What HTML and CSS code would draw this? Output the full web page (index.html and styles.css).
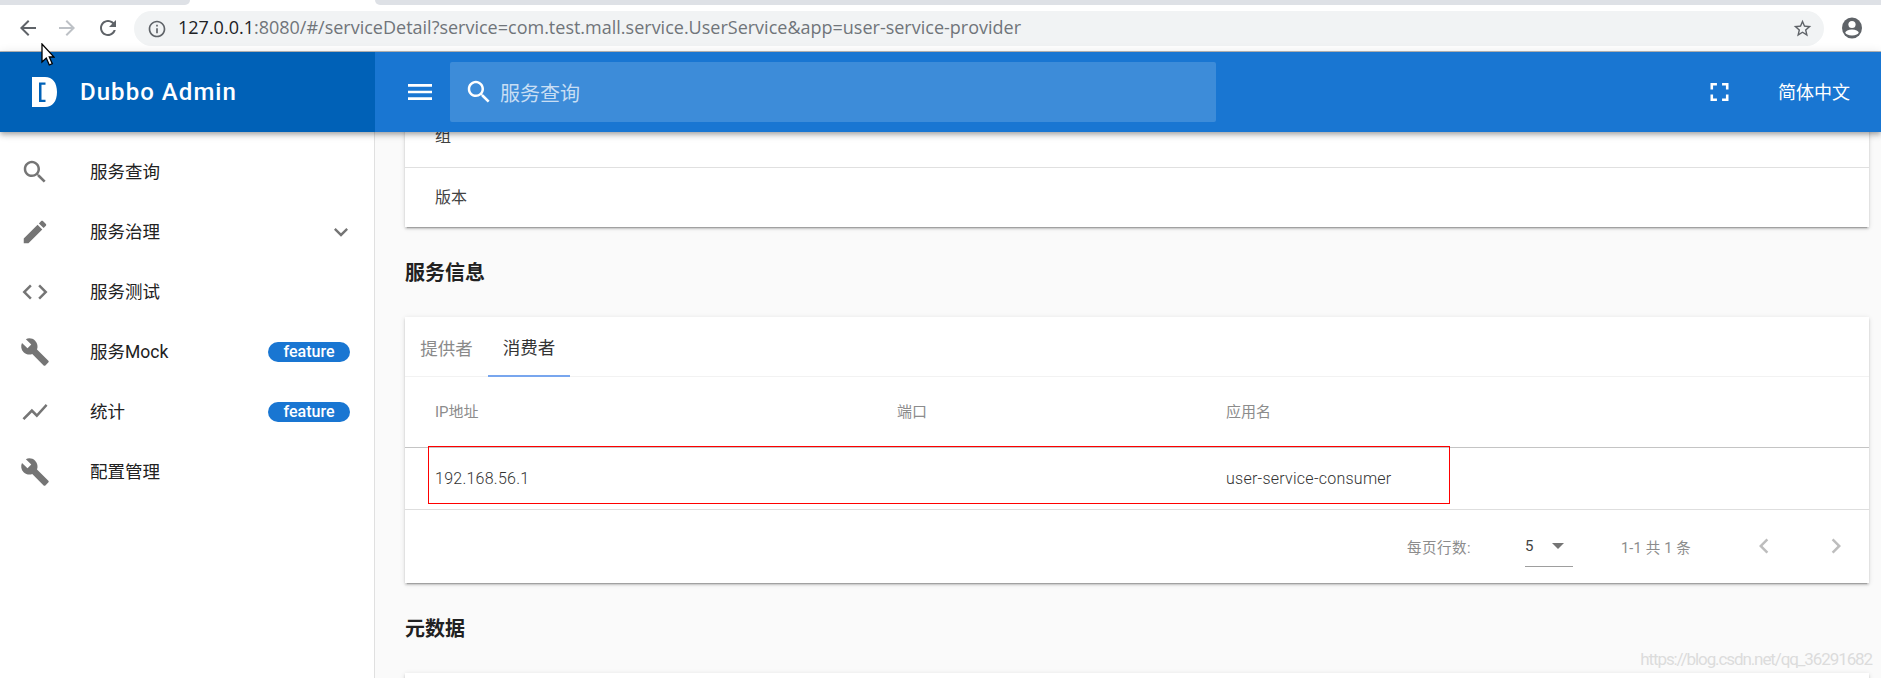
FILE: index.html
```html
<!DOCTYPE html>
<html lang="zh-CN">
<head>
<meta charset="utf-8">
<title>Dubbo Admin</title>
<link rel="stylesheet" href="styles.css">
</head>
<body>
<div class="browser">
  <div class="tabstrip"><div class="tab-off tab-off-left"></div><div class="tab-on"></div><div class="tab-off tab-off-right"></div></div>
  <div class="toolbar">
    <svg class="tb-icon tb-back" viewBox="0 0 24 24"><path d="M20 11H7.83l5.59-5.59L12 4l-8 8 8 8 1.41-1.41L7.83 13H20v-2z"/></svg>
    <svg class="tb-icon tb-forward" viewBox="0 0 24 24"><path d="M4 11h12.17l-5.59-5.59L12 4l8 8-8 8-1.41-1.41L16.17 13H4v-2z"/></svg>
    <svg class="tb-icon tb-reload" viewBox="0 0 24 24"><path d="M17.65 6.35C16.2 4.9 14.21 4 12 4c-4.42 0-7.99 3.58-7.99 8s3.57 8 7.99 8c3.73 0 6.84-2.55 7.73-6h-2.08c-.82 2.33-3.04 4-5.65 4-3.31 0-6-2.69-6-6s2.69-6 6-6c1.66 0 3.14.69 4.22 1.78L13 11h7V4l-2.35 2.35z"/></svg>
    <div class="omnibox">
      <svg class="tb-info" viewBox="0 0 24 24"><path d="M11 7h2v2h-2zm0 4h2v6h-2zm1-9C6.48 2 2 6.48 2 12s4.48 10 10 10 10-4.48 10-10S17.52 2 12 2zm0 18c-4.41 0-8-3.59-8-8s3.59-8 8-8 8 3.59 8 8-3.59 8-8 8z"/></svg>
      <div class="url"><span class="url-host">127.0.0.1</span>:8080/#/serviceDetail?service=com.test.mall.service.UserService&amp;app=user-service-provider</div>
      <svg class="tb-star" viewBox="0 0 24 24"><path d="M22 9.24l-7.19-.62L12 2 9.19 8.63 2 9.24l5.46 4.73L5.82 21 12 17.27 18.18 21l-1.63-7.03L22 9.24zM12 15.4l-3.76 2.27 1-4.28-3.32-2.88 4.38-.38L12 6.1l1.71 4.04 4.38.38-3.32 2.88 1 4.28L12 15.4z"/></svg>
    </div>
    <svg class="tb-account" viewBox="0 0 20 22"><ellipse cx="10" cy="11" rx="10" ry="10.5" fill="#5f6368"/><circle cx="10" cy="7.5" r="3.6" fill="#fff"/><ellipse cx="10" cy="15.5" rx="6.6" ry="3" fill="#fff"/></svg>
  </div>
</div>

<header class="appbar">
  <div class="brand">
    <svg class="logo" viewBox="0 0 25 30"><path fill-rule="evenodd" d="M0 0h13c7.500 0 12 5.500 12 15s-4.500 15-12 15H0zM7 5.500v19.500h6.500v-2.200h-4V7.700h4V5.500z"/></svg>
    <span class="brand-name">Dubbo Admin</span>
  </div>
  <div class="appbar-main">
    <svg class="menu-icon" viewBox="0 0 24 24"><path d="M3 18h18v-2H3v2zm0-5h18v-2H3v2zm0-7v2h18V6H3z"/></svg>
    <div class="search">
      <svg class="search-icon" viewBox="0 0 24 24"><path d="M15.500 14h-.79l-.28-.27C15.410 12.590 16 11.110 16 9.500 16 5.910 13.090 3 9.500 3S3 5.910 3 9.500 5.910 16 9.500 16c1.610 0 3.090-.59 4.230-1.570l.27.28v.79l5 4.990L20.490 19l-4.990-5zm-6 0C7.010 14 5 11.990 5 9.500S7.010 5 9.500 5 14 7.010 14 9.500 11.990 14 9.500 14z"/></svg>
      <span class="search-text">服务查询</span>
    </div>
    <svg class="full-icon" viewBox="5 5 14 14"><path d="M7 14H5v5h5v-2H7v-3zm-2-4h2V7h3V5H5v5zm12 7h-3v2h5v-5h-2v3zM14 5v2h3v3h2V5h-5z"/></svg>
    <span class="lang">简体中文</span>
  </div>
</header>

<div class="layout">
  <nav class="sidebar">
    <div class="nav-item">
      <svg class="nav-icon" viewBox="0 0 24 24"><path d="M15.500 14h-.79l-.28-.27C15.410 12.590 16 11.110 16 9.500 16 5.910 13.090 3 9.500 3S3 5.910 3 9.500 5.910 16 9.500 16c1.610 0 3.090-.59 4.230-1.570l.27.28v.79l5 4.990L20.490 19l-4.990-5zm-6 0C7.010 14 5 11.990 5 9.500S7.010 5 9.500 5 14 7.010 14 9.500 11.990 14 9.500 14z"/></svg>
      <span class="nav-label">服务查询</span>
    </div>
    <div class="nav-item">
      <svg class="nav-icon" viewBox="0 0 24 24"><path d="M3 17.250V21h3.750L17.810 9.940l-3.750-3.750L3 17.250zM20.710 7.040c.39-.39.39-1.020 0-1.410l-2.340-2.340c-.39-.39-1.020-.39-1.410 0l-1.830 1.830 3.750 3.750 1.830-1.830z"/></svg>
      <span class="nav-label">服务治理</span>
      <svg class="nav-chevron" viewBox="0 0 24 24"><path d="M16.590 8.590L12 13.170 7.410 8.590 6 10l6 6 6-6z"/></svg>
    </div>
    <div class="nav-item">
      <svg class="nav-icon" viewBox="0 0 24 24"><path d="M9.400 16.600L4.800 12l4.600-4.600L8 6l-6 6 6 6 1.400-1.400zm5.200 0l4.600-4.600-4.600-4.600L16 6l6 6-6 6-1.400-1.400z"/></svg>
      <span class="nav-label">服务测试</span>
    </div>
    <div class="nav-item">
      <svg class="nav-icon" viewBox="0 0 24 24"><path d="M22.700 19l-9.100-9.100c.9-2.300.4-5-1.500-6.900-2-2-5-2.400-7.400-1.300L9 6 6 9 1.600 4.700C.4 7.100.9 10.100 2.900 12.100c1.900 1.900 4.600 2.400 6.900 1.500l9.100 9.100c.4.4 1 .4 1.400 0l2.300-2.300c.5-.4.5-1.100.1-1.400z"/></svg>
      <span class="nav-label">服务Mock</span>
      <span class="badge">feature</span>
    </div>
    <div class="nav-item">
      <svg class="nav-icon" viewBox="0 0 24 24"><path d="M3.500 18.490l6-6.010 4 4L22 6.920l-1.410-1.410-7.090 7.970-4-4L2 16.990z"/></svg>
      <span class="nav-label">统计</span>
      <span class="badge">feature</span>
    </div>
    <div class="nav-item">
      <svg class="nav-icon" viewBox="0 0 24 24"><path d="M22.700 19l-9.100-9.100c.9-2.300.4-5-1.500-6.900-2-2-5-2.400-7.400-1.300L9 6 6 9 1.600 4.700C.4 7.100.9 10.100 2.900 12.100c1.900 1.900 4.600 2.400 6.900 1.500l9.100 9.100c.4.4 1 .4 1.400 0l2.300-2.300c.5-.4.5-1.100.1-1.400z"/></svg>
      <span class="nav-label">配置管理</span>
    </div>
  </nav>

  <main class="content">
    <section class="card card-top">
      <div class="info-row">组</div>
      <div class="info-row">版本</div>
    </section>

    <h2 class="section-title">服务信息</h2>

    <section class="card card-table">
      <div class="tabs">
        <div class="tab">提供者</div>
        <div class="tab tab-active">消费者</div>
      </div>
      <table class="data">
        <colgroup><col class="col-ip"><col class="col-port"><col></colgroup>
        <thead><tr><th>IP地址</th><th>端口</th><th>应用名</th></tr></thead>
        <tbody><tr><td>192.168.56.1</td><td></td><td>user-service-consumer</td></tr></tbody>
      </table>
      <div class="pager">
        <span class="pager-label">每页行数:</span>
        <div class="pager-select"><span class="pager-value">5</span><svg class="pager-drop" viewBox="7 10 10 5"><path d="M7 10l5 5 5-5z"/></svg></div>
        <span class="pager-range">1-1 共 1 条</span>
        <svg class="pager-prev" viewBox="0 0 24 24"><path d="M15.410 7.410L14 6l-6 6 6 6 1.410-1.410L10.830 12z"/></svg>
        <svg class="pager-next" viewBox="0 0 24 24"><path d="M10 6L8.590 7.410 13.170 12l-4.580 4.590L10 18l6-6z"/></svg>
      </div>
      <div class="highlight"></div>
    </section>

    <h2 class="section-title section-title-low">元数据</h2>
    <section class="card card-bottom"></section>
  </main>
</div>

<div class="watermark">https://blog.csdn.net/qq_36291682</div>
<svg class="cursor" viewBox="0 0 14 23"><path d="M1 1v18l4.300-4 3 7 3-1.300-3-6.700H13z" fill="#fff" stroke="#000" stroke-width="1.300"/></svg>
</body>
</html>
```

FILE: styles.css
```css
* { box-sizing: border-box; }

html, body {
  margin: 0;
  height: 100%;
  overflow: hidden;
}

body {
  position: relative;
  width: 1881px;
  height: 678px;
  background: #fafafa;
  font-family: Roboto, "Noto Sans CJK SC", sans-serif;
  color: #212121;
}

svg { display: block; flex: none; }

/* browser chrome */
.browser { height: 52px; background: #fff; border-bottom: 1px solid #b9b9b9; }

.tabstrip { display: flex; height: 5px; }
.tab-off { background: #dee1e6; }
.tab-off-left { width: 190px; border-bottom-right-radius: 5px; }
.tab-on { width: 185px; background: #fff; }
.tab-off-right { flex: 1; border-bottom-left-radius: 5px; }

.toolbar { display: flex; align-items: center; height: 46px; padding-left: 16px; }
.tb-icon { width: 24px; height: 24px; fill: #5f6368; margin-bottom: 1px; }
.tb-forward { fill: #bdc1c6; margin-left: 15px; }
.tb-reload { width: 24px; margin-left: 17px; }

.omnibox {
  display: flex;
  align-items: center;
  width: 1690px;
  height: 35px;
  margin-left: 14px;
  padding-left: 13px;
  background: #f1f3f4;
  border-radius: 18px;
}
.tb-info { width: 20px; height: 20px; fill: #5f6368; margin-top: 1px; }
.url {
  flex: 1;
  margin-left: 11px;
  padding-bottom: 2px;
  font-family: "Open Sans", "Noto Sans", sans-serif;
  font-size: 18px;
  white-space: nowrap;
  color: #70757a;
}
.url-host { color: #202124; }
.tb-star { width: 21px; height: 21px; fill: #5f6368; margin-right: 11px; }
.tb-account { width: 20px; height: 22px; margin-left: 18px; }

/* app bar */
.appbar {
  position: relative;
  z-index: 2;
  display: flex;
  height: 80px;
  color: #fff;
  background: #1976d2;
  box-shadow: 0 2px 4px -1px rgba(0,0,0,.2), 0 4px 5px 0 rgba(0,0,0,.14), 0 1px 10px 0 rgba(0,0,0,.12);
}
.brand {
  display: flex;
  align-items: center;
  width: 375px;
  padding: 0 0 0 32px;
  background: #0061b7;
}
.logo { width: 25px; height: 30px; fill: #fff; }
.brand-name { margin-left: 23px; font-size: 24px; font-weight: 500; letter-spacing: 1.05px; }

.appbar-main { flex: 1; display: flex; align-items: center; padding-left: 29px; }
.menu-icon { width: 32px; height: 34px; fill: #fff; }
.search {
  display: flex;
  align-items: center;
  width: 766px;
  height: 60px;
  margin-left: 14px;
  padding-left: 14px;
  background: rgba(255,255,255,.16);
  border-radius: 2px;
}
.search-icon { width: 30px; height: 30px; fill: #fff; }
.search-text { margin-left: 6px; font-size: 20px; color: rgba(255,255,255,.72); }
.full-icon { width: 19px; height: 18px; margin-left: 494px; fill: #fff; }
.lang { margin-left: 49px; padding-bottom: 2px; font-size: 18px; }

/* layout */
.layout { display: flex; height: 546px; }

.sidebar {
  width: 375px;
  padding-top: 10px;
  background: #fff;
  border-right: 1px solid #e0e0e0;
}
.nav-item { display: flex; align-items: center; height: 60px; padding: 0 20px 0 20px; }
.nav-icon { width: 30px; height: 30px; fill: #757575; }
.nav-label { flex: 1; margin-left: 40px; padding-bottom: 4px; font-size: 17.500px; color: #212121; }
.nav-chevron { width: 28px; height: 28px; margin-right: -1px; fill: #757575; }
.badge {
  width: 82px;
  height: 20px;
  margin-right: 4px;
  font-size: 16px;
  font-weight: 500;
  line-height: 20px;
  text-align: center;
  color: #fff;
  background: #1976d2;
  border-radius: 10px;
}

.content { flex: 1; min-width: 0; padding: 0 12px 0 30px; overflow: hidden; }

.card {
  position: relative;
  background: #fff;
  box-shadow: 0 3px 1px -2px rgba(0,0,0,.2), 0 2px 2px 0 rgba(0,0,0,.14), 0 1px 5px 0 rgba(0,0,0,.12);
}
.card-top { margin-top: -25px; }
.card-bottom { height: 60px; }

.info-row {
  display: flex;
  align-items: center;
  height: 60px;
  padding: 0 0 4px 30px;
  font-size: 16px;
  color: #424242;
  border-top: 1px solid #e0e0e0;
}
.info-row:first-child { border-top: 0; }

.section-title {
  display: flex;
  align-items: center;
  height: 90px;
  margin: 0;
  padding-bottom: 2px;
  font-size: 20px;
  font-weight: 700;
  color: #212121;
}
.section-title-low { padding-bottom: 0; }

/* tabs */
.tabs { display: flex; height: 60px; padding-left: 0; border-bottom: 1px solid #f2f2f2; }
.tab {
  display: flex;
  align-items: center;
  justify-content: center;
  height: 60px;
  font-size: 17.500px;
  color: #8a8a8a;
}
.tab:first-child { width: 83px; }
.tab-active { width: 82px; color: #333; border-bottom: 2px solid #78a6ee; }

/* table */
.data { width: 100%; border-collapse: collapse; table-layout: fixed; }
.col-ip { width: 492px; }
.col-port { width: 329px; }
.data th, .data td { padding: 0 0 0 30px; text-align: left; }
.data th + th, .data td + td { padding-left: 0; }
.data th {
  height: 70px;
  padding-bottom: 2px;
  font-size: 15px;
  font-weight: 400;
  color: #8c8c8c;
  border-bottom: 1px solid #c4c4c4;
}
.data td {
  height: 62px;
  font-size: 16px;
  font-weight: 300;
  letter-spacing: .25px;
  color: #333;
  border-bottom: 1px solid #dedede;
}

/* pagination */
.pager { display: flex; align-items: center; height: 73px; padding: 0 0 0 1002px; font-size: 14.500px; color: #8c8c8c; }
.pager-label { width: 67px; letter-spacing: .5px; white-space: nowrap; }
.pager-select {
  display: flex;
  align-items: center;
  width: 48px;
  height: 40px;
  margin: 0 0 16px 51px;
  color: #424242;
  border-bottom: 1px solid #9e9e9e;
  align-self: flex-end;
}
.pager-value { font-size: 15px; }
.pager-drop { width: 12px; height: 6px; margin-left: 19px; fill: #757575; }
.pager-range { width: 72px; margin-left: 48px; letter-spacing: .2px; white-space: nowrap; }
.pager-prev, .pager-next { width: 30px; height: 30px; fill: #bdbdbd; }
.pager-prev { margin-left: 56px; }
.pager-next { margin-left: 42px; }

.highlight {
  position: absolute;
  top: 129px;
  left: 23px;
  width: 1022px;
  height: 58px;
  border: 1px solid #f00;
  pointer-events: none;
}

/* overlays */
.watermark {
  position: absolute;
  z-index: 3;
  right: 9px;
  top: 649px;
  font-size: 17px;
  letter-spacing: -1.1px;
  color: #dcdcdc;
}
.cursor { position: absolute; z-index: 4; left: 41px; top: 43px; width: 14px; height: 23px; }
```
